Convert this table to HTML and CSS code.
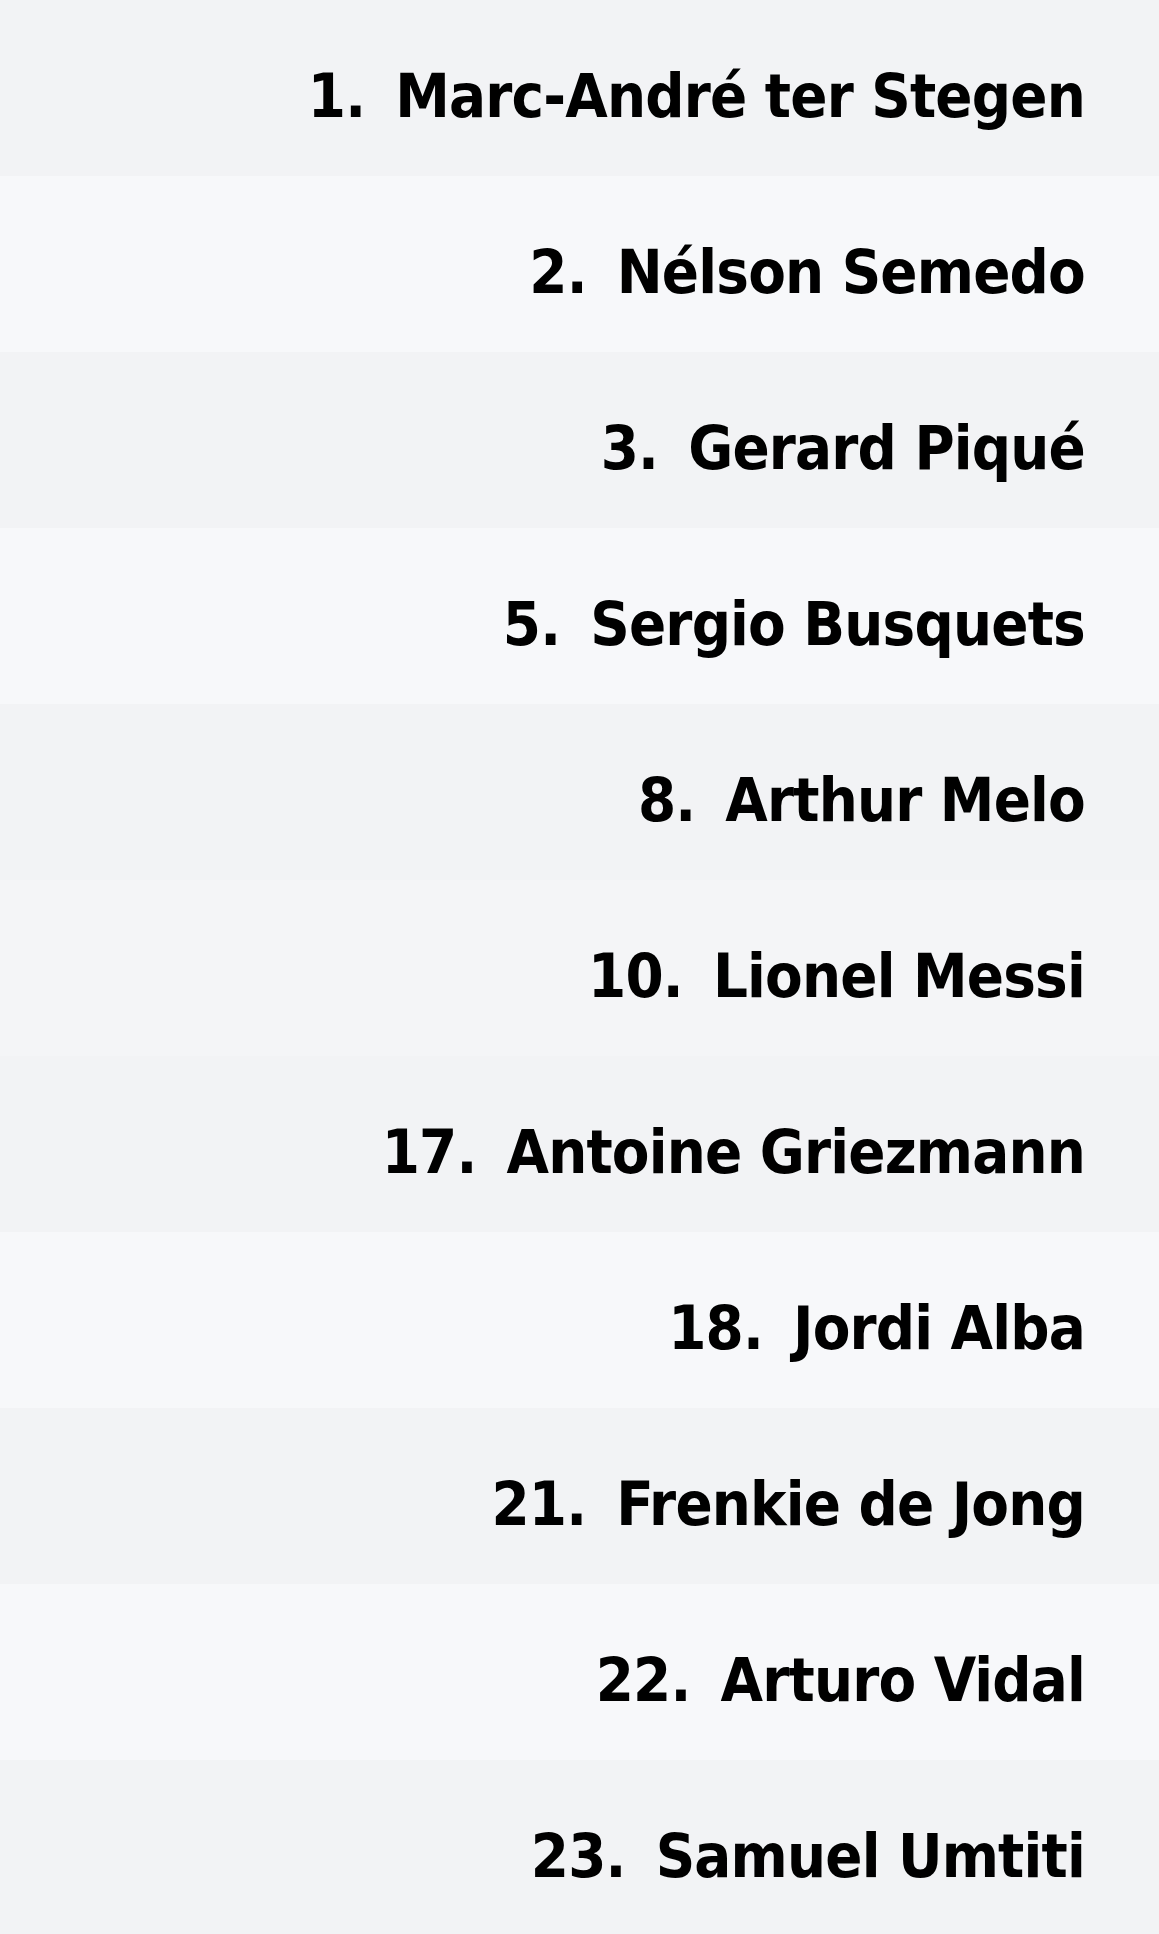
FILE: index.html
```html
<!DOCTYPE html>
<html lang="es">
<head>
  <meta charset="UTF-8" />
  <meta name="viewport" content="width=device-width, initial-scale=1" />
  <title>Plantilla</title>
  <link rel="stylesheet" href="styles.css">
</head>

<body>
  <!-- Lista de jugadores -->
  <ul class="plantilla">
    <li class="jugador"><span class="dorsal">1.</span><span class="nombre">Marc-André ter Stegen</span></li>
    <li class="jugador"><span class="dorsal">2.</span><span class="nombre">Nélson Semedo</span></li>
    <li class="jugador"><span class="dorsal">3.</span><span class="nombre">Gerard Piqué</span></li>
    <li class="jugador"><span class="dorsal">5.</span><span class="nombre">Sergio Busquets</span></li>
    <li class="jugador"><span class="dorsal">8.</span><span class="nombre">Arthur Melo</span></li>
    <li class="jugador medio"><span class="dorsal">10.</span><span class="nombre">Lionel Messi</span></li>
    <li class="jugador"><span class="dorsal">17.</span><span class="nombre">Antoine Griezmann</span></li>
    <li class="jugador"><span class="dorsal">18.</span><span class="nombre">Jordi Alba</span></li>
    <li class="jugador"><span class="dorsal">21.</span><span class="nombre">Frenkie de Jong</span></li>
    <li class="jugador"><span class="dorsal">22.</span><span class="nombre">Arturo Vidal</span></li>
    <li class="jugador"><span class="dorsal">23.</span><span class="nombre">Samuel Umtiti</span></li>
  </ul>
</body>
</html>
```

FILE: styles.css
```css
* {
  box-sizing: border-box;
}

body {
  margin: 0;
  background: #f2f3f5;
  font-family: 'DejaVu Sans Condensed', 'DejaVu Sans', sans-serif;
  font-stretch: condensed;
  color: #000;
}

.plantilla {
  list-style: none;
  margin: 0;
  padding: 0;
}

.jugador {
  height: 176px;
  display: flex;
  align-items: center;
  justify-content: flex-end;
  padding: 14px 74px 0 0;
  background: #f2f3f5;
  font-size: 61px;
  font-weight: bold;
  letter-spacing: -0.8px;
}

.jugador:nth-child(even) {
  background: #f7f8fa;
}

.jugador.medio {
  background: #f4f5f7;
}

.dorsal {
  margin-right: 30px;
}
```
